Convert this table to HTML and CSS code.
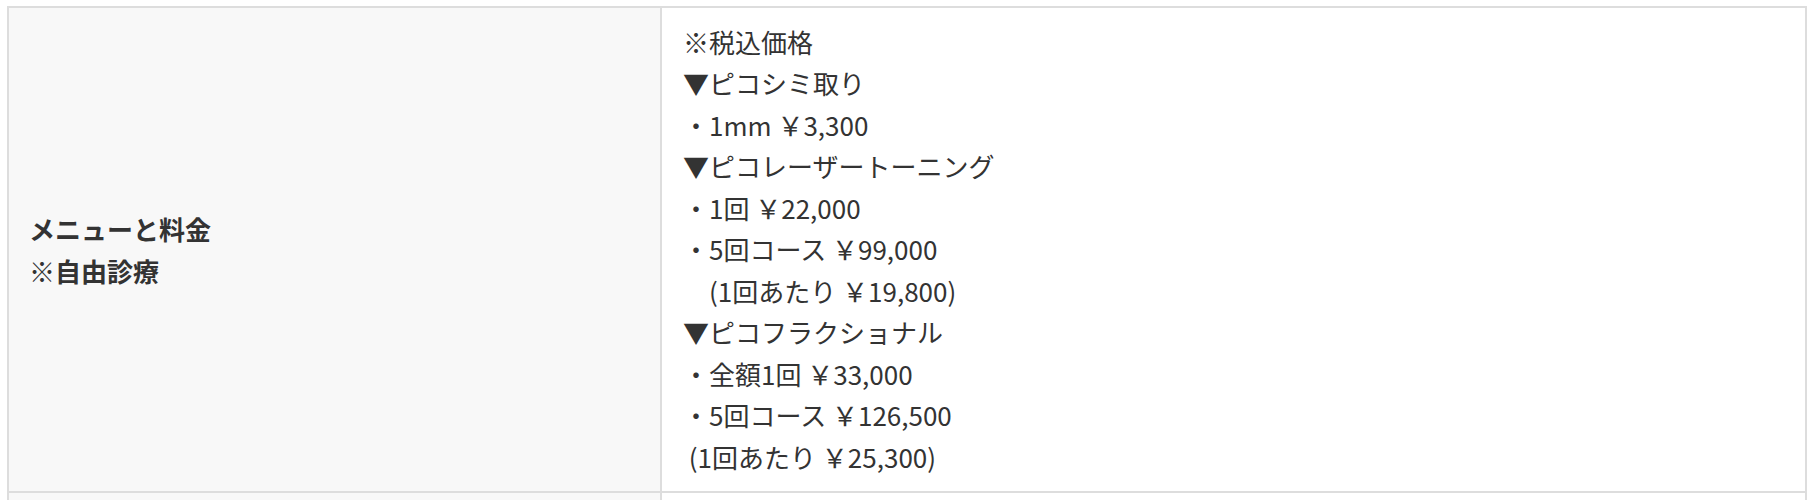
FILE: index.html
```html
<!DOCTYPE html>
<html lang="ja">
<head>
<meta charset="utf-8">
<title>メニューと料金</title>
<link rel="stylesheet" href="styles.css">
</head>
<body>
<div class="table">
  <div class="cell label">
    <p>メニューと料金<br>※自由診療</p>
  </div>
  <div class="cell value">
    <p>※税込価格<br>▼ピコシミ取り<br>・1mm ￥3,300<br>▼ピコレーザートーニング<br>・1回 ￥22,000<br>・5回コース ￥99,000<br>　(1回あたり ￥19,800)<br>▼ピコフラクショナル<br>・全額1回 ￥33,000<br>・5回コース ￥126,500<br>&nbsp;(1回あたり ￥25,300)</p>
  </div>
  <div class="cell label next"></div>
  <div class="cell value next"></div>
</div>
</body>
</html>
```
FILE: styles.css
```css
html, body {
  margin: 0;
  padding: 0;
  background: #fff;
}
body {
  padding: 6px 0 0 7px;
  font-family: "Noto Sans CJK JP", "Noto Sans", sans-serif;
  font-size: 26px;
  line-height: 41.5px;
  color: #333;
}
.table {
  display: grid;
  grid-template-columns: 653px 1145px;
  width: 1800px;
  box-sizing: border-box;
  border-top: 2px solid #ddd;
  border-left: 2px solid #ddd;
}
.cell {
  box-sizing: border-box;
  border-right: 2px solid #ddd;
  border-bottom: 2px solid #ddd;
}
.cell p {
  margin: 0;
}
.label {
  background: #f8f8f8;
  font-weight: 700;
  display: flex;
  align-items: center;
  padding: 0 20px;
}
.value {
  background: #fff;
  padding: 12.5px 20px 14px 21px;
}
.next {
  height: 120px;
}
```
